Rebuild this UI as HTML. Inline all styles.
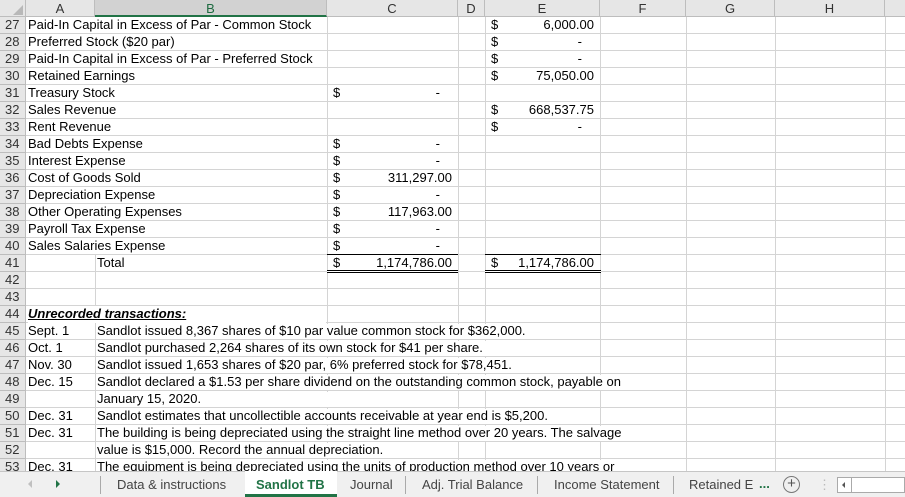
<!DOCTYPE html>
<html><head><meta charset="utf-8"><style>
*{margin:0;padding:0;box-sizing:border-box}
body{width:905px;height:497px;overflow:hidden;background:#fff;font-family:"Liberation Sans",Arial,sans-serif;font-size:13px;color:#000;position:relative}
.a{position:absolute;white-space:nowrap;line-height:17px}
.v{position:absolute;background:#d4d4d4;width:1px}
.h{position:absolute;background:#d4d4d4;height:1px}
.hdr{position:absolute;top:0;height:17px;background:#e6e6e6;border-right:1px solid #bdbdbd;border-bottom:1px solid #bdbdbd;text-align:center;line-height:17px;color:#333;font-size:13px}
.rn{position:absolute;left:0;width:26px;height:17px;background:#e6e6e6;border-right:1px solid #bdbdbd;border-bottom:1px solid #bdbdbd;text-align:left;padding-left:5px;line-height:16px;color:#333;font-size:13px}
.r{text-align:right}
</style></head><body>
<!-- grid lines -->
<div class="v" style="left:95px;top:254px;height:51px"></div>
<div class="v" style="left:95px;top:322px;height:150px"></div>
<div class="v" style="left:327px;top:17px;height:455px"></div>
<div class="v" style="left:458px;top:17px;height:455px"></div>
<div class="v" style="left:485px;top:17px;height:455px"></div>
<div class="v" style="left:600px;top:17px;height:455px"></div>
<div class="v" style="left:686px;top:17px;height:455px"></div>
<div class="v" style="left:775px;top:17px;height:455px"></div>
<div class="v" style="left:885px;top:17px;height:455px"></div>
<div id="hl"></div>
<script>
var s='';for(var i=0;i<27;i++){var t=33+i*17;s+='<div class="h" style="left:26px;width:879px;top:'+t+'px"></div>';s+='<div class="rn" style="top:'+(17+i*17)+'px">'+(27+i)+'</div>';}
document.getElementById('hl').outerHTML=s;
</script>
<!-- column headers -->
<div class="hdr" style="left:0;width:26px"><svg width="10" height="10" style="position:absolute;left:13px;top:5px"><polygon points="10,0 10,10 0,10" fill="#b8b8b8"/></svg></div>
<div class="hdr" style="left:26px;width:69px">A</div>
<div class="hdr" style="left:95px;width:232px;background:#d2d2d2;border-bottom:2px solid #217346;color:#1e6b41">B</div>
<div class="hdr" style="left:327px;width:131px">C</div>
<div class="hdr" style="left:458px;width:27px">D</div>
<div class="hdr" style="left:485px;width:115px">E</div>
<div class="hdr" style="left:600px;width:86px">F</div>
<div class="hdr" style="left:686px;width:89px">G</div>
<div class="hdr" style="left:775px;width:110px">H</div>
<div class="hdr" style="left:885px;width:20px;border-right:none"></div>

<div class="a" style="left:28px;top:16px">Paid-In Capital in Excess of Par - Common Stock</div>
<div class="a" style="left:28px;top:33px">Preferred Stock ($20 par)</div>
<div class="a" style="left:28px;top:50px">Paid-In Capital in Excess of Par - Preferred Stock</div>
<div class="a" style="left:28px;top:67px">Retained Earnings</div>
<div class="a" style="left:28px;top:84px">Treasury Stock</div>
<div class="a" style="left:28px;top:101px">Sales Revenue</div>
<div class="a" style="left:28px;top:118px">Rent Revenue</div>
<div class="a" style="left:28px;top:135px">Bad Debts Expense</div>
<div class="a" style="left:28px;top:152px">Interest Expense</div>
<div class="a" style="left:28px;top:169px">Cost of Goods Sold</div>
<div class="a" style="left:28px;top:186px">Depreciation Expense</div>
<div class="a" style="left:28px;top:203px">Other Operating Expenses</div>
<div class="a" style="left:28px;top:220px">Payroll Tax Expense</div>
<div class="a" style="left:28px;top:237px">Sales Salaries Expense</div>
<div class="a" style="left:97px;top:254px">Total</div>

<!-- E column -->
<div class="a" style="left:491px;top:16px">$</div><div class="a r" style="left:500px;width:94px;top:16px">6,000.00</div>
<div class="a" style="left:491px;top:33px">$</div><div class="a r" style="left:500px;width:82px;top:33px">-</div>
<div class="a" style="left:491px;top:50px">$</div><div class="a r" style="left:500px;width:82px;top:50px">-</div>
<div class="a" style="left:491px;top:67px">$</div><div class="a r" style="left:500px;width:94px;top:67px">75,050.00</div>
<div class="a" style="left:491px;top:101px">$</div><div class="a r" style="left:500px;width:94px;top:101px">668,537.75</div>
<div class="a" style="left:491px;top:118px">$</div><div class="a r" style="left:500px;width:82px;top:118px">-</div>

<!-- C column -->
<div class="a" style="left:333px;top:84px">$</div><div class="a r" style="left:340px;width:100px;top:84px">-</div>
<div class="a" style="left:333px;top:135px">$</div><div class="a r" style="left:340px;width:100px;top:135px">-</div>
<div class="a" style="left:333px;top:152px">$</div><div class="a r" style="left:340px;width:100px;top:152px">-</div>
<div class="a" style="left:333px;top:169px">$</div><div class="a r" style="left:340px;width:112px;top:169px">311,297.00</div>
<div class="a" style="left:333px;top:186px">$</div><div class="a r" style="left:340px;width:100px;top:186px">-</div>
<div class="a" style="left:333px;top:203px">$</div><div class="a r" style="left:340px;width:112px;top:203px">117,963.00</div>
<div class="a" style="left:333px;top:220px">$</div><div class="a r" style="left:340px;width:100px;top:220px">-</div>
<div class="a" style="left:333px;top:237px">$</div><div class="a r" style="left:340px;width:100px;top:237px">-</div>
<div class="a" style="left:333px;top:254px">$</div><div class="a r" style="left:340px;width:112px;top:254px">1,174,786.00</div>
<div class="a" style="left:491px;top:254px">$</div><div class="a r" style="left:500px;width:94px;top:254px">1,174,786.00</div>
<!-- total borders -->
<div style="position:absolute;left:327px;top:254px;width:131px;height:1px;background:#000"></div>
<div style="position:absolute;left:485px;top:254px;width:116px;height:1px;background:#000"></div>
<div style="position:absolute;left:327px;top:270px;width:131px;height:3px;border-top:1px solid #000;border-bottom:1px solid #000;background:#fff"></div>
<div style="position:absolute;left:485px;top:270px;width:116px;height:3px;border-top:1px solid #000;border-bottom:1px solid #000;background:#fff"></div>

<!-- Unrecorded -->
<div style="position:absolute;left:28px;top:307px;width:298px;height:16px;background:#fff"></div>
<div class="a" style="left:28px;top:305px;font-weight:bold;font-style:italic;text-decoration:underline">Unrecorded transactions:</div>
<div id="tx"></div>
<script>
var rows=[["Sept. 1","Sandlot issued 8,367 shares of $10 par value common stock for $362,000."],["Oct. 1","Sandlot purchased 2,264 shares of its own stock for $41 per share."],["Nov. 30","Sandlot issued 1,653 shares of $20 par, 6% preferred stock for $78,451."],["Dec. 15","Sandlot declared a $1.53 per share dividend on the outstanding common stock, payable on"],["","January 15, 2020."],["Dec. 31","Sandlot estimates that uncollectible accounts receivable at year end is $5,200."],["Dec. 31","The building is being depreciated using the straight line method over 20 years. The salvage"],["","value is $15,000. Record the annual depreciation."],["Dec. 31","The equipment is being depreciated using the units of production method over 10 years or"]];
var w=[430,390,430,530,240,470,530,300,530];
var s='';for(var i=0;i<rows.length;i++){var t=323+i*17;
s+='<div class="a" style="left:28px;top:'+(t-1)+'px">'+rows[i][0]+'</div>';
s+='<div style="position:absolute;left:97px;top:'+(t+1)+'px;width:'+w[i]+'px;height:15px;background:#fff"></div>';
s+='<div class="a" style="left:97px;top:'+(t-1)+'px">'+rows[i][1]+'</div>';}
document.getElementById('tx').outerHTML=s;
</script>

<!-- tab bar -->
<div style="position:absolute;left:0;top:471px;width:905px;height:26px;background:#f0f0f0;border-top:1px solid #c6c6c6;font-size:13px;color:#444">
<div style="position:absolute;left:28px;top:8px;width:0;height:0;border-top:4px solid transparent;border-bottom:4px solid transparent;border-right:4px solid #c0c0c0"></div>
<div style="position:absolute;left:56px;top:8px;width:0;height:0;border-top:4px solid transparent;border-bottom:4px solid transparent;border-left:4px solid #217346"></div>
<div style="position:absolute;left:100px;top:4px;width:1px;height:18px;background:#aaa"></div>
<div class="a" style="left:117px;top:4px">Data &amp; instructions</div>
<div style="position:absolute;left:245px;top:-1px;width:92px;height:26px;background:#fff;border-bottom:3px solid #217346"></div>
<div class="a" style="left:256px;top:4px;color:#217346;font-weight:bold">Sandlot TB</div>
<div class="a" style="left:350px;top:4px">Journal</div>
<div style="position:absolute;left:405px;top:4px;width:1px;height:18px;background:#aaa"></div>
<div class="a" style="left:422px;top:4px">Adj. Trial Balance</div>
<div style="position:absolute;left:537px;top:4px;width:1px;height:18px;background:#aaa"></div>
<div class="a" style="left:554px;top:4px">Income Statement</div>
<div style="position:absolute;left:673px;top:4px;width:1px;height:18px;background:#aaa"></div>
<div class="a" style="left:689px;top:4px">Retained E</div>
<div class="a" style="left:759px;top:3px;color:#217346;font-weight:bold">...</div>
<div style="position:absolute;left:783px;top:4px;width:17px;height:17px;border:1px solid #777;border-radius:50%;text-align:center;line-height:14px;font-size:15px;color:#555">+</div>
<div class="a" style="left:818px;top:4px;color:#bbb">⋮</div>
<div style="position:absolute;left:837px;top:5px;width:68px;height:16px;background:#fff;border:1px solid #aaa"></div>
<div style="position:absolute;left:837px;top:5px;width:15px;height:16px;border-right:1px solid #aaa"></div>
<div style="position:absolute;left:842px;top:10px;width:0;height:0;border-top:3px solid transparent;border-bottom:3px solid transparent;border-right:3px solid #555"></div>
</div>
</body></html>
